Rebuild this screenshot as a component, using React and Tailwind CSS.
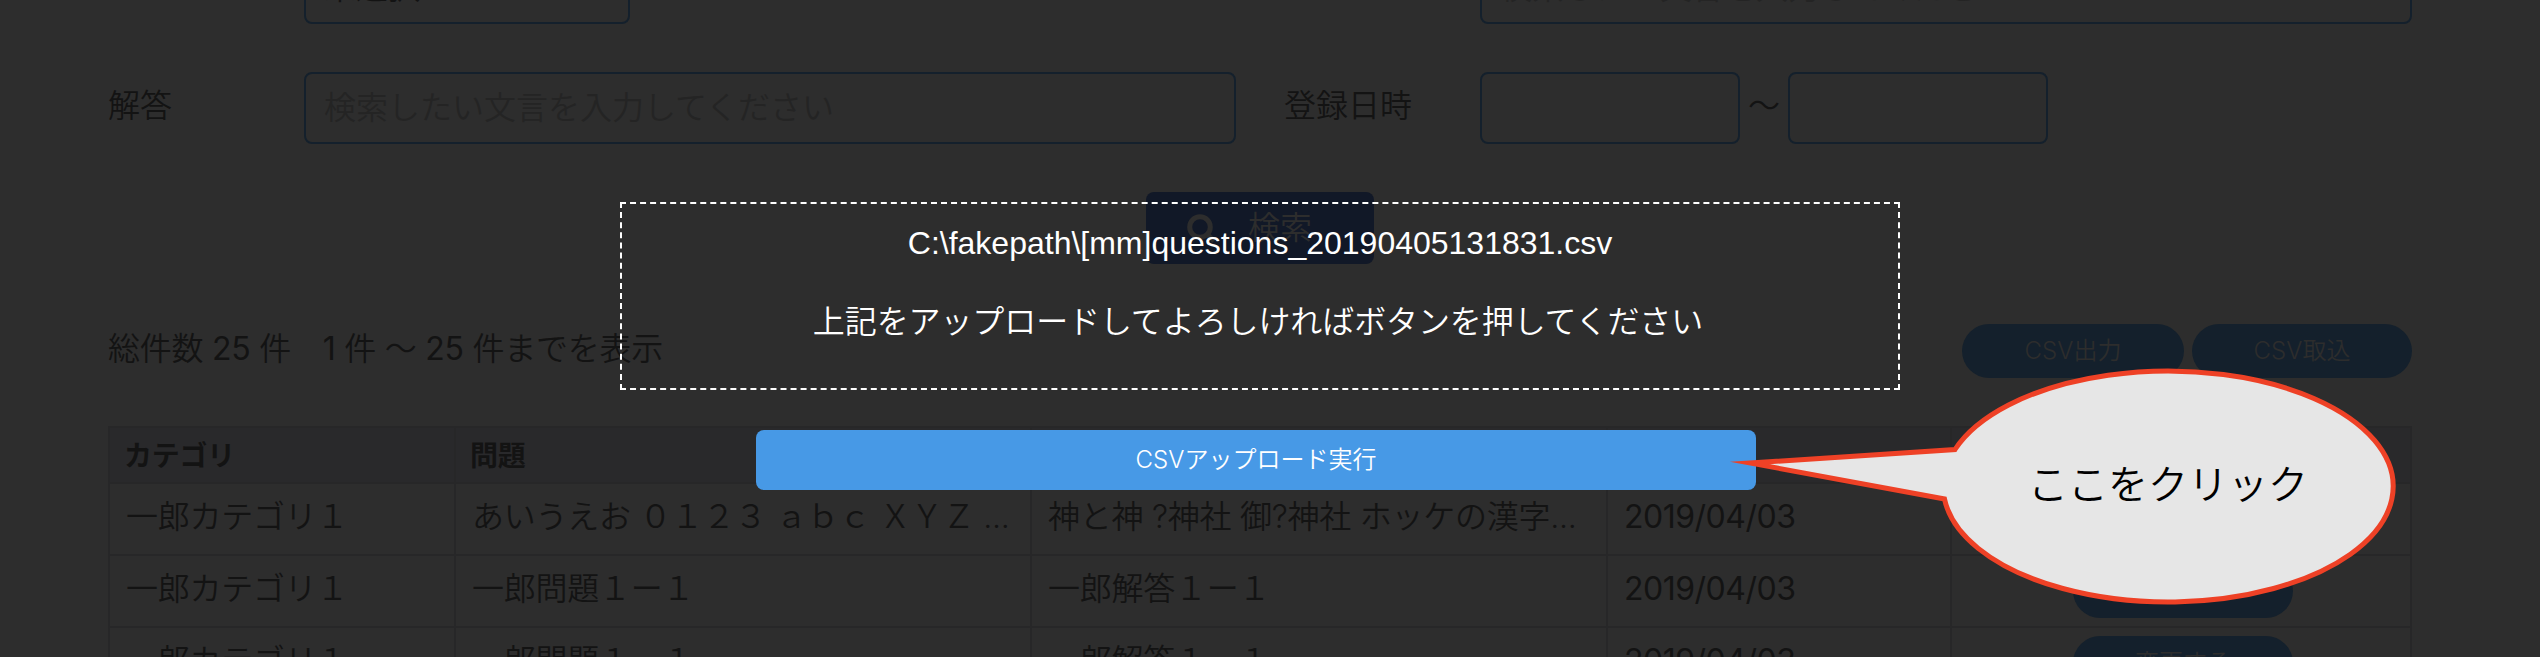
const rows = [
  { category: '一郎カテゴリ１', question: 'あいうえお ０１２３ ａｂｃ ＸＹＺ ...', answer: '神と神 ?神社 御?神社 ホッケの漢字...', date: '2019/04/03' },
  { category: '一郎カテゴリ１', question: '一郎問題１ー１', answer: '一郎解答１ー１', date: '2019/04/03' },
  { category: '一郎カテゴリ１', question: '一郎問題１ー１', answer: '一郎解答１ー１', date: '2019/04/03' },
];

const field = 'h-[72px] rounded-lg border-2 border-[#14202c]';

function SearchForm() {
  return (
    <section>
      <div className="-mt-12 grid h-[72px] grid-cols-[196px_980px_196px_932px]">
        <span />
        <div className={`${field} w-[326px] pl-[18px] pt-[10px] leading-[48px]`}>未選択</div>
        <span />
        <div className={`${field} pl-[18px] pt-[10px] leading-[48px] text-[#242424]`}>検索したい文言を入力してください</div>
      </div>
      <div className="mt-12 grid h-[72px] grid-cols-[196px_980px_196px_932px]">
        <span className="pt-[10px] leading-[48px]">解答</span>
        <div className={`${field} w-[932px] pl-[18px] pt-[10px] leading-[48px] text-[#242424]`}>検索したい文言を入力してください</div>
        <span className="pt-[10px] leading-[48px]">登録日時</span>
        <div className="flex">
          <div className={`${field} w-[260px]`} />
          <span className="w-12 pt-[10px] text-center leading-[48px]">〜</span>
          <div className={`${field} w-[260px]`} />
        </div>
      </div>
      <div className="mt-12 flex justify-center">
        <button className="flex h-[72px] w-[228px] items-center rounded-lg bg-[#111827] pl-[38px] text-[#2d2d2d]">
          <svg className="size-9" viewBox="0 0 36 36" fill="none" stroke="currentColor" strokeWidth="5">
            <circle cx="16" cy="17" r="10.3" />
            <path d="M23 24l7 7" />
          </svg>
          <span className="ml-7">検索</span>
        </button>
      </div>
    </section>
  );
}

function Results() {
  return (
    <section className="pt-[60px]">
      <div className="flex h-[54px] items-start justify-between">
        <p className="whitespace-pre leading-[50px] tracking-[-0.25px]">
          総件数 <span className="font-normal">25</span> 件　<span className="font-normal">1</span> 件 〜 <span className="font-normal">25</span> 件までを表示
        </p>
        <div className="flex gap-2 text-2xl tracking-normal text-[#2d2d2d]">
          <button className="h-[54px] w-[222px] rounded-full bg-[#14202c]">CSV出力</button>
          <button className="h-[54px] w-[220px] rounded-full bg-[#14202c]">CSV取込</button>
        </div>
      </div>
      <div className="mt-12 border-r-2 border-b-2 border-[#272728]">
        <div className="grid h-14 grid-cols-[346px_576px_576px_344px_460px] bg-[#29292b] text-[28px] font-bold tracking-[-0.25px]">
          {['カテゴリ', '問題', '解答', '登録日時', ''].map((h, i) => (
            <div key={i} className="border-t-2 border-l-2 border-[#272728] pl-3.5 leading-[56px]">{h}</div>
          ))}
        </div>
        {rows.map((r, i) => (
          <div key={i} className="grid h-[72px] grid-cols-[346px_576px_576px_344px_460px]">
            {[r.category, r.question, r.answer].map((t, j) => (
              <div key={j} className="border-t-2 border-l-2 border-[#272728] pl-4 leading-[66px] tracking-[-0.25px] whitespace-pre">{t}</div>
            ))}
            <div className="border-t-2 border-l-2 border-[#272728] pl-4 leading-[66px] font-normal tracking-[-0.5px]">{r.date}</div>
            <div className="flex justify-center border-t-2 border-l-2 border-[#272728] pt-2 pl-1">
              <button className="h-[54px] w-[220px] rounded-full bg-[#14202c] text-2xl text-[#2d2d2d]">変更する</button>
            </div>
          </div>
        ))}
      </div>
    </section>
  );
}

function UploadDialog() {
  return (
    <div className="absolute inset-0 flex flex-col items-center pt-[202px] pr-5 text-white">
      <div className="flex h-[188px] w-[1280px] flex-col items-center border-2 border-dashed border-white font-['Liberation_Sans','Noto_Sans_CJK_JP',sans-serif]">
        <p className="mt-[15px] font-normal leading-[48px]">{'C:\\fakepath\\[mm]questions_20190405131831.csv'}</p>
        <p className="mt-[31px] mr-1 leading-[48px] tracking-[-0.1px]">上記をアップロードしてよろしければボタンを押してください</p>
      </div>
      <button className="mt-10 mr-2 h-[60px] w-[1000px] rounded-lg bg-[#4799e6] text-2xl">CSVアップロード実行</button>
    </div>
  );
}

function Callout() {
  return (
    <div className="absolute left-[1728px] top-[366px] flex h-[242px] w-[670px] items-center justify-center pb-1 pl-[210px]">
      <svg className="absolute inset-0 size-full" viewBox="1728 366 670 242" fill="#e6e6e6" stroke="#ee4126" strokeWidth="5">
        <path strokeMiterlimit="20" d="M1750 463L1955 449.500A225 115.500 0 1 1 1944.500 499Z" />
      </svg>
      <span className="relative text-[40px] text-black">ここをクリック</span>
    </div>
  );
}

export default function App() {
  return (
    <div className="relative h-[657px] w-[2540px] overflow-hidden bg-[#2d2d2d] font-['Inter','Noto_Sans_CJK_JP',sans-serif] text-[32px] font-[350] text-[#131313]">
      <main className="flow-root w-[2412px] pl-[108px]">
        <SearchForm />
        <Results />
      </main>
      <UploadDialog />
      <Callout />
    </div>
  );
}
